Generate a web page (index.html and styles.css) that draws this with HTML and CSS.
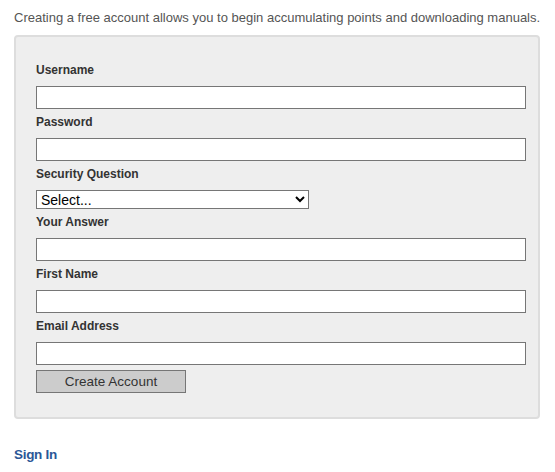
FILE: index.html
```html
<!DOCTYPE html>
<html>
<head>
<meta charset="utf-8">
<link rel="stylesheet" href="styles.css">
</head>
<body>
<div class="page">
  <p class="intro">Creating a free account allows you to begin accumulating points and downloading manuals.</p>
  <form class="panel">
    <label class="label">Username</label>
    <input class="field" type="text">
    <label class="label">Password</label>
    <input class="field" type="password">
    <label class="label">Security Question</label>
    <select class="choice"><option>Select...</option></select>
    <label class="label">Your Answer</label>
    <input class="field" type="text">
    <label class="label">First Name</label>
    <input class="field" type="text">
    <label class="label">Email Address</label>
    <input class="field" type="text">
    <button class="submit" type="button">Create Account</button>
  </form>
  <a class="signin" href="#">Sign In</a>
</div>
</body>
</html>
```
FILE: styles.css
```css
html, body {
  margin: 0;
  padding: 0;
  background: #fff;
}
.page {
  padding: 10px 15px 0 14px;
  font-family: "Liberation Sans", Arial, sans-serif;
}
.intro {
  margin: 0;
  font-size: 13px;
  line-height: 16px;
  color: #555;
  white-space: nowrap;
}
.panel {
  margin-top: 9px;
  background: #eee;
  border: 2px solid #ddd;
  border-radius: 4px;
  padding: 25px 12px 24px 20px;
  display: flex;
  flex-direction: column;
  align-items: flex-start;
}
.label {
  display: block;
  font-size: 12px;
  font-weight: bold;
  line-height: 16px;
  color: #333;
  margin: 0 0 8px;
}
.field {
  box-sizing: border-box;
  width: 100%;
  height: 23px;
  margin: 0 0 5px;
  border: 1px solid #767676;
  border-radius: 0;
  background: #fff;
  padding: 0 4px;
  font: 14px "Liberation Sans", Arial, sans-serif;
}
.choice {
  box-sizing: border-box;
  width: 273px;
  height: 19px;
  margin: 0 0 5px;
  border: 1px solid #767676;
  border-radius: 0;
  background-color: #fff;
  padding: 0;
  font: 14px "Liberation Sans", Arial, sans-serif;
  color: #000;
}
.submit {
  box-sizing: border-box;
  width: 150px;
  height: 23px;
  margin: 0;
  border: 1px solid #767676;
  border-radius: 0;
  background: #ccc;
  color: #333;
  font: 13.5px "Liberation Sans", Arial, sans-serif;
  padding: 0;
}
.signin {
  display: inline-block;
  margin-top: 27px;
  font-family: "Liberation Sans", Arial, sans-serif;
  font-size: 13.5px;
  letter-spacing: -0.3px;
  line-height: 18px;
  font-weight: bold;
  color: #2b5797;
  text-decoration: none;
}
```
